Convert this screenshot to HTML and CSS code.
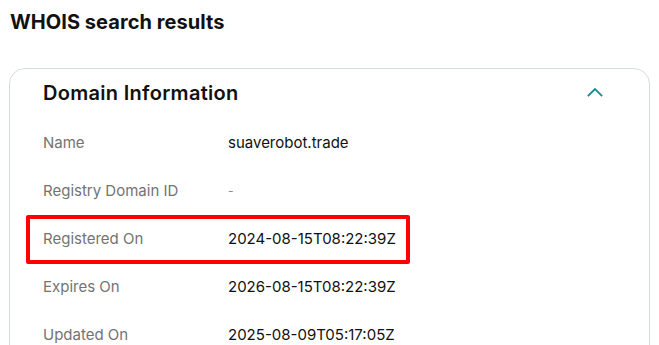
FILE: index.html
```html
<!DOCTYPE html>
<html lang="en">
<head>
<meta charset="utf-8">
<title>WHOIS search results</title>
<link rel="stylesheet" href="styles.css">
</head>
<body>
<main class="page">
  <h1 class="page-title">WHOIS search results</h1>
  <section class="card">
    <header class="card-header">
      <h2 class="card-title">Domain Information</h2>
      <svg class="chevron" width="16" height="10" viewBox="0 0 16 10" aria-hidden="true">
        <path d="M1.5 8.5 L8 2 L14.5 8.5" fill="none" stroke="#1b8a8f" stroke-width="1.8" stroke-linecap="square"/>
      </svg>
    </header>
    <dl class="rows">
      <div class="row"><dt class="label">Name</dt><dd class="value">suaverobot.trade</dd></div>
      <div class="row"><dt class="label">Registry Domain ID</dt><dd class="value muted">-</dd></div>
      <div class="row highlighted"><dt class="label">Registered On</dt><dd class="value">2024-08-15T08:22:39Z</dd></div>
      <div class="row"><dt class="label">Expires On</dt><dd class="value">2026-08-15T08:22:39Z</dd></div>
      <div class="row"><dt class="label">Updated On</dt><dd class="value">2025-08-09T05:17:05Z</dd></div>
    </dl>
  </section>
</main>
</body>
</html>
```

FILE: styles.css
```css
*, *::before, *::after { box-sizing: border-box; }
html, body {
  margin: 0;
  padding: 0;
  background: #ffffff;
  overflow: hidden;
}
body {
  font-family: Inter, "Noto Sans", "Liberation Sans", sans-serif;
  color: #111111;
}
.page {
  padding: 9px 9px 0 10px;
}
.page-title {
  margin: 0;
  font-size: 20px;
  line-height: 26px;
  font-weight: 700;
  letter-spacing: 0.05px;
  color: #111111;
}
.card {
  margin-top: 33px;
  width: 641px;
  height: 400px;
  margin-left: -1px;
  border: 1px solid #d6dce1;
  border-radius: 16px;
  padding: 0 46px 0 33px;
}
.card-header {
  display: flex;
  align-items: center;
  justify-content: space-between;
  height: 48px;
}
.card-title {
  margin: 0;
  font-size: 20px;
  line-height: 26px;
  font-weight: 600;
  letter-spacing: 0.3px;
  color: #111111;
}
.chevron {
  display: block;
  margin-top: -2px;
}
.rows {
  margin: 2px 0 0 0;
  padding: 0;
}
.row {
  display: flex;
  align-items: center;
  height: 48px;
  font-size: 15px;
  line-height: 20px;
}
.label {
  width: 185px;
  flex: none;
  color: #737373;
  margin: 0;
}
.value {
  margin: 0;
  color: #111111;
}
.value.muted {
  color: #8a8a8a;
  font-size: 12px;
}
.highlighted {
  position: relative;
}
.highlighted::after {
  content: "";
  position: absolute;
  left: -17px;
  top: 0;
  width: 384px;
  height: 49px;
  border: 4px solid #ff0000;
  border-radius: 2px;
}
```
